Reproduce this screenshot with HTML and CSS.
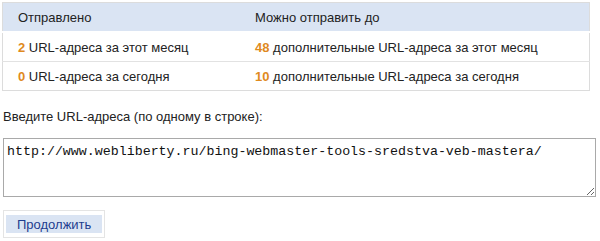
FILE: index.html
```html
<!DOCTYPE html>
<html lang="ru">
  <head>
    <meta charset="UTF-8" />
    <title>Отправить URL-адреса</title>
    <link rel="stylesheet" href="styles.css">
  </head>
  <body>
    <div class="page">
      <table class="quota">
        <thead>
          <tr>
            <th class="col1">Отправлено</th>
            <th>Можно отправить до</th>
          </tr>
        </thead>
        <tbody>
          <tr>
            <td><b class="num">2</b> URL-адреса за этот месяц</td>
            <td><b class="num">48</b> дополнительные URL-адреса за этот месяц</td>
          </tr>
          <tr>
            <td><b class="num">0</b> URL-адреса за сегодня</td>
            <td><b class="num">10</b> дополнительные URL-адреса за сегодня</td>
          </tr>
        </tbody>
      </table>

      <label for="urls" class="hint">Введите URL-адреса (по одному в строке):</label>
      <textarea id="urls" class="urls">http://www.webliberty.ru/bing-webmaster-tools-sredstva-veb-mastera/</textarea>

      <div class="btn-wrap">
        <button class="btn">Продолжить</button>
      </div>
    </div>
  </body>
</html>
```

FILE: styles.css
```css
body {
  margin: 0;
  background: #fff;
  font-family: "Liberation Sans", Arial, sans-serif;
  font-size: 13px;
  color: #222;
}

.page {
  padding: 2px 0 0 2px;
  width: 594px;
}

/* table with quota info */
.quota {
  width: 588px;
  border-collapse: collapse;
  border: 1px solid #dcdcdc;
}

.quota th,
.quota td {
  text-align: left;
  font-weight: normal;
  padding: 0 0 0 15px;
  height: 28px;
}

.quota th {
  background-color: #dae4f3;
  border-bottom: 2px solid #fff;
  height: 28px;
}

.quota td {
  border-top: 1px solid #e2e2e2;
}

.quota .col1 {
  width: 222px;
}

.num {
  color: #e08a1e;
}

.hint {
  display: block;
  margin: 18px 0 0 1px;
  line-height: 15px;
}

.urls {
  display: block;
  box-sizing: border-box;
  width: 593px;
  height: 59px;
  margin: 14px 0 0 1px;
  padding: 5px 3px;
  border: 1px solid #a9a9a9;
  font-family: "Liberation Mono", "Courier New", monospace;
  font-size: 13.3px;
  color: #111;
  resize: vertical;
}

.btn-wrap {
  display: inline-block;
  margin: 13px 0 0 1px;
  padding: 4px 2px 4px 2px;
  border: 1px solid #e4e4e4;
}

.btn {
  display: block;
  background-color: #dae4f3;
  border: none;
  padding: 1px 11px 1px 11px;
  height: 18px;
  font-family: "Liberation Sans", Arial, sans-serif;
  font-size: 13px;
  color: #1d3d8f;
}
```
